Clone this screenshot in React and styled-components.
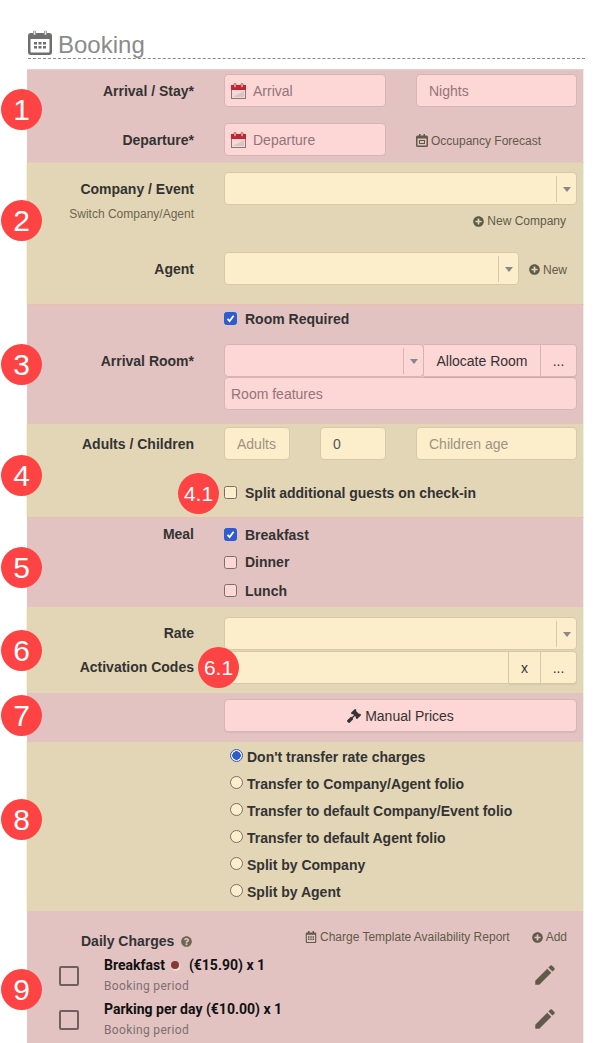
import React from "react";
import styled, { createGlobalStyle } from "styled-components";
import { FaPlusCircle, FaGavel, FaQuestionCircle, FaRegCalendarAlt } from "react-icons/fa";
import { MdEdit } from "react-icons/md";

const PINK = "#e3c3c2";
const TAN = "#e3d6b6";
const tones = {
  pink: { field: "#fdd6d6", line: "#d5b5b6", text: "#94747a" },
  tan: { field: "#fcedcb", line: "#d6c9a7", text: "#9c9482" },
};

const GlobalStyle = createGlobalStyle`
  html, body {
    margin: 0;
    height: 1043px;
    overflow: hidden;
    background: #fff;
    font-family: "Liberation Sans", Arial, sans-serif;
    font-size: 14px;
    color: #333;
  }
`;

const Page = styled.div`
  width: 558px;
  padding: 28px 0 0 27px;
`;

const Title = styled.h2`
  display: flex;
  align-items: flex-end;
  gap: 6px;
  height: 30px;
  margin: 0 0 10px 1px;
  width: 557px;
  border-bottom: 1px dashed #8a8a8a;
  color: #8b8b8b;
  font-size: 24px;
  font-weight: 400;
  line-height: 26px;
  svg {
    margin-bottom: 3px;
  }
`;

const Section = styled.section`
  position: relative;
  box-sizing: border-box;
  width: 557px;
  height: ${(p) => p.$height}px;
  padding-top: ${(p) => p.$top || 0}px;
  background: ${(p) => (p.$tone === "tan" ? TAN : PINK)};
  border-right: 1px solid #eee;
  box-shadow: ${(p) => (p.$tone === "tan" ? "-1px 0 0 #fbf1d4" : "none")};
  border-top: ${(p) => (p.$edge ? `1px solid ${p.$edge}` : "none")};
`;

const Badge = styled.div`
  position: absolute;
  z-index: 2;
  left: ${(p) => p.$left ?? -26}px;
  top: ${(p) => p.$y}px;
  width: 41px;
  height: 41px;
  border-radius: 50%;
  background: #fd4343;
  color: #fff;
  display: flex;
  align-items: center;
  justify-content: center;
  font-size: ${(p) => (p.$small ? 21 : 30)}px;
  line-height: 1;
`;

const Row = styled.div`
  display: grid;
  grid-template-columns: 167px 353px;
  column-gap: 30px;
  margin-bottom: ${(p) => p.$gap || 0}px;
`;

const Label = styled.label`
  text-align: right;
  font-weight: 700;
  font-size: 14px;
  height: ${(p) => p.$line || 33}px;
  line-height: ${(p) => p.$line || 35}px;
  color: #333;
  white-space: nowrap;
`;

const SubLabel = styled.div`
  text-align: right;
  font-size: 12px;
  line-height: 16px;
  color: #6b6650;
  margin-top: 1px;
`;

const Controls = styled.div`
  display: flex;
  gap: ${(p) => p.$gap || 0}px;
  align-items: center;
  min-width: 0;
`;

const Field = styled.div`
  box-sizing: border-box;
  flex: ${(p) => (p.$width ? `0 0 ${p.$width}px` : "1 1 0")};
  height: 33px;
  display: flex;
  align-items: center;
  gap: 7px;
  padding: 0 6px;
  background: ${(p) => tones[p.$tone].field};
  border: 1px solid ${(p) => tones[p.$tone].line};
  border-radius: 4px;
  font-size: 14px;
  color: ${(p) => (p.$value ? "#555" : tones[p.$tone].text)};
  padding-left: ${(p) => p.$inset || 6}px;
  min-width: 0;
`;

const Group = styled.div`
  display: flex;
  flex: 1;
  min-width: 0;
  & > * {
    border-radius: 0;
  }
  & > *:first-child {
    border-radius: ${(p) => (p.$flat ? "4px 0 0 4px" : "4px")};
  }
  & > *:last-child {
    border-radius: 0 4px 4px 0;
  }
`;

const GroupButton = styled.div`
  box-sizing: border-box;
  height: 33px;
  flex: 0 0 ${(p) => p.$width}px;
  display: flex;
  align-items: center;
  justify-content: center;
  background: ${(p) => tones[p.$tone].field};
  border: 1px solid ${(p) => tones[p.$tone].line};
  border-left: none;
  box-shadow: 0 1px 1px rgba(0, 0, 0, 0.06);
  color: #333;
  font-size: 14px;
`;

const SelectBox = styled(Field)`
  padding: 0;
  justify-content: flex-end;
  gap: 0;
`;

const Caret = styled.span`
  width: 19px;
  height: 26px;
  border-left: 1px solid ${(p) => tones[p.$tone].line};
  display: flex;
  align-items: center;
  justify-content: center;
  &::after {
    content: "";
    margin-top: 2px;
    border: 4px solid transparent;
    border-top: 5px solid #888;
    border-bottom: none;
  }
`;

const TextLink = styled.span`
  display: inline-flex;
  align-items: center;
  gap: 3px;
  padding-top: 2px;
  font-size: 12px;
  color: #5f5b48;
  white-space: nowrap;
`;

const LinkRow = styled.div`
  display: flex;
  justify-content: flex-end;
  padding-right: 11px;
  line-height: 16px;
  margin-top: 6px;
`;

const Check = styled.span`
  box-sizing: border-box;
  width: 13px;
  height: 13px;
  flex: none;
  border-radius: 2.500px;
  border: 1px solid ${(p) => (p.$on ? "#2f5bd0" : "#77706a")};
  background: ${(p) => (p.$on ? "#2f5bd0" : p.$tone === "tan" ? "#fcedcb" : "#fdd6d6")};
  display: flex;
  align-items: center;
  justify-content: center;
`;

const Option = styled.div`
  display: flex;
  align-items: center;
  gap: 8px;
  height: ${(p) => p.$height || 27}px;
  font-weight: 700;
  font-size: 14px;
  color: #333;
`;

const Radio = styled.span`
  box-sizing: border-box;
  width: 13px;
  height: 13px;
  border-radius: 50%;
  margin: -2px 0 0 6px;
  flex: none;
  border: 1px solid ${(p) => (p.$on ? "#2f5bd0" : "#77706a")};
  background: ${(p) => (p.$on ? "radial-gradient(circle, #2f5bd0 0 4px, #fcedcb 4.500px)" : "#fcedcb")};
`;

const RadioText = styled.span`
  margin-left: -4px;
`;

const WideButton = styled.div`
  box-sizing: border-box;
  height: 33px;
  width: 100%;
  display: flex;
  align-items: center;
  justify-content: center;
  gap: 4px;
  background: #fdd6d6;
  border: 1px solid #d5b5b6;
  border-radius: 4px;
  box-shadow: 0 1px 1px rgba(0, 0, 0, 0.06);
  font-size: 14px;
  color: #333;
`;

const ChargeHead = styled.div`
  display: flex;
  align-items: flex-start;
  padding-left: 54px;
  height: 43px;
  padding-top: 17px;
  box-sizing: border-box;
`;

const ChargeTitle = styled.div`
  display: flex;
  align-items: center;
  gap: 7px;
  margin-top: 5px;
  font-weight: 700;
  font-size: 14px;
  color: #333;
  svg {
    color: #6b6650;
  }
`;

const ChargeLinks = styled.div`
  margin-left: auto;
  padding-right: 16px;
  display: flex;
  gap: 22px;
`;

const Charge = styled.div`
  display: grid;
  grid-template-columns: 32px 20px 25px 1fr 26px 25px;
  align-items: center;
  height: 44px;
  & > svg {
    grid-column: 5;
    color: #5f5b48;
    margin-top: -3px;
  }
`;

const BigCheck = styled.span`
  grid-column: 2;
  box-sizing: border-box;
  width: 20px;
  height: 20px;
  margin-top: -1px;
  border: 2px solid #6f625e;
  border-radius: 2px;
`;

const ChargeText = styled.div`
  grid-column: 4;
  margin-bottom: 4px;
  font-family: Roboto, sans-serif;
  font-size: 14px;
`;

const ChargeName = styled.div`
  font-weight: 700;
  color: #111;
  line-height: 20px;
  display: flex;
  align-items: center;
  gap: 4px;
`;

const ChargeNote = styled.div`
  color: #7d6f70;
  font-size: 12px;
  line-height: 16px;
  margin-top: 3px;
  letter-spacing: 0.350px;
`;

const Dot = styled.span`
  width: 8px;
  height: 8px;
  border-radius: 50%;
  margin: 0 6px 0 2px;
  background: #843a35;
  box-shadow: 1px 2px 1px #f2dcd8;
`;

const HeadingIcon = () => (
  <svg width="24" height="25" viewBox="0 0 24 25">
    <path fill="#6f6f6f" fillRule="evenodd" d="M3 3h2V1h3v2h8V1h3v2h2a3 3 0 0 1 3 3v16a3 3 0 0 1-3 3H3a3 3 0 0 1-3-3V6a3 3 0 0 1 3-3zM2.500 9v12.500a1 1 0 0 0 1 1h17a1 1 0 0 0 1-1V9zM6 12h3v2.500H6zm4.500 0h3v2.500h-3zm4.500 0h3v2.500h-3zM6 16h3v2.500H6zm4.500 0h3v2.500h-3zm4.500 0h3v2.500h-3z" />
    <rect x="5.500" y="0" width="2" height="5" rx="1" fill="#ddd" />
    <rect x="16.500" y="0" width="2" height="5" rx="1" fill="#ddd" />
  </svg>
);

const DateIcon = () => (
  <svg width="15" height="16" viewBox="0 0 15 16" style={{ flex: "none" }}>
    <rect x="0.500" y="2.500" width="14" height="13" fill="#f3d8d8" stroke="#8f7474" />
    <rect x="0" y="2" width="15" height="5" fill="#c4232f" />
    <path d="M2 14 13 8v6z" fill="#d9c4c4" />
    <rect x="3" y="0.500" width="2" height="4" rx="1" fill="#fdd6d6" stroke="#8f3b3b" strokeWidth="0.800" />
    <rect x="10" y="0.500" width="2" height="4" rx="1" fill="#fdd6d6" stroke="#8f3b3b" strokeWidth="0.800" />
  </svg>
);

const ForecastIcon = () => (
  <svg width="12" height="13" viewBox="0 0 12 13">
    <path fill="#5f5b48" fillRule="evenodd" d="M1.500 1.500H3V0h1.500v1.500h3V0H9v1.500h1.500A1.500 1.500 0 0 1 12 3v8.500a1.500 1.500 0 0 1-1.500 1.500h-9A1.500 1.500 0 0 1 0 11.500V3a1.500 1.500 0 0 1 1.500-1.500zM1.500 4.500v7h9v-7zM3 6h6v4H3zm1 1v2h4V7z" />
  </svg>
);

const Tick = () => (
  <svg width="9" height="9" viewBox="0 0 9 9">
    <path d="M1.500 4.800 3.600 7 7.600 1.800" fill="none" stroke="#fff" strokeWidth="1.800" />
  </svg>
);

const Select = ({ tone, width }) => (
  <SelectBox $tone={tone} $width={width}>
    <Caret $tone={tone} />
  </SelectBox>
);

const TRANSFERS = [
  "Don't transfer rate charges",
  "Transfer to Company/Agent folio",
  "Transfer to default Company/Event folio",
  "Transfer to default Agent folio",
  "Split by Company",
  "Split by Agent",
];

const App = () => (
  <Page>
    <GlobalStyle />
    <Title>
      <HeadingIcon />
      Booking
    </Title>

    <Section $tone="pink" $height={93} $top={4} $edge="#f0cdc9">
      <Badge $y={19}>1</Badge>
      <Row $gap={16}>
        <Label>Arrival / Stay*</Label>
        <Controls $gap={30}>
          <Field $tone="pink" $width={162}>
            <DateIcon />
            Arrival
          </Field>
          <Field $tone="pink" $width={161} $inset={12}>Nights</Field>
        </Controls>
      </Row>
      <Row>
        <Label>Departure*</Label>
        <Controls $gap={30}>
          <Field $tone="pink" $width={162}>
            <DateIcon />
            Departure
          </Field>
          <TextLink>
            <ForecastIcon />
            Occupancy Forecast
          </TextLink>
        </Controls>
      </Row>
    </Section>

    <Section $tone="tan" $height={142} $top={9} $edge="#e6cdaf">
      <Badge $y={37}>2</Badge>
      <Row $gap={23}>
        <div>
          <Label as="div">Company / Event</Label>
          <SubLabel>Switch Company/Agent</SubLabel>
        </div>
        <div>
          <Controls>
            <Select tone="tan" />
          </Controls>
          <LinkRow>
            <TextLink>
              <FaPlusCircle size={11} />
              New Company
            </TextLink>
          </LinkRow>
        </div>
      </Row>
      <Row>
        <Label>Agent</Label>
        <Controls $gap={10}>
          <Select tone="tan" width={295} />
          <TextLink>
            <FaPlusCircle size={11} />
            New
          </TextLink>
        </Controls>
      </Row>
    </Section>

    <Section $tone="pink" $height={120} $edge="#ebbfae">
      <Badge $y={39}>3</Badge>
      <Row $gap={12}>
        <div />
        <Option>
          <Check $on><Tick /></Check>
          Room Required
        </Option>
      </Row>
      <Row>
        <Label>Arrival Room*</Label>
        <div>
          <Group>
            <Select tone="pink" />
            <GroupButton $tone="pink" $width={117}>Allocate Room</GroupButton>
            <GroupButton $tone="pink" $width={36}>...</GroupButton>
          </Group>
          <Field $tone="pink">Room features</Field>
        </div>
      </Row>
    </Section>

    <Section $tone="tan" $height={93} $top={3}>
      <Badge $y={31}>4</Badge>
      <Badge $y={49} $left={151} $small>4.1</Badge>
      <Row $gap={19}>
        <Label>Adults / Children</Label>
        <Controls $gap={30}>
          <Field $tone="tan" $width={66} $inset={12}>Adults</Field>
          <Field $tone="tan" $width={66} $inset={12} $value>0</Field>
          <Field $tone="tan" $width={161} $inset={12}>Children age</Field>
        </Controls>
      </Row>
      <Row>
        <div />
        <Option>
          <Check $tone="tan" />
          Split additional guests on check-in
        </Option>
      </Row>
    </Section>

    <Section $tone="pink" $height={90} $top={3} $edge="#ebbfae">
      <Badge $y={29}>5</Badge>
      <Row>
        <Label $line={27}>Meal</Label>
        <div>
          <Option>
            <Check $on><Tick /></Check>
            Breakfast
          </Option>
          <Option $height={28}>
            <Check />
            Dinner
          </Option>
          <Option $height={29}>
            <Check />
            Lunch
          </Option>
        </div>
      </Row>
    </Section>

    <Section $tone="tan" $height={86} $top={10}>
      <Badge $y={23}>6</Badge>
      <Badge $y={40} $left={171} $small>6.1</Badge>
      <Row $gap={1}>
        <Label $line={33}>Rate</Label>
        <Controls>
          <Select tone="tan" />
        </Controls>
      </Row>
      <Row>
        <Label $line={33}>Activation Codes</Label>
        <Group $flat>
          <Field $tone="tan" />
          <GroupButton $tone="tan" $width={32}>x</GroupButton>
          <GroupButton $tone="tan" $width={36}>...</GroupButton>
        </Group>
      </Row>
    </Section>

    <Section $tone="pink" $height={49} $top={6}>
      <Badge $y={2}>7</Badge>
      <Row>
        <div />
        <WideButton>
          <FaGavel size={14} />
          Manual Prices
        </WideButton>
      </Row>
    </Section>

    <Section $tone="tan" $height={169} $top={1}>
      <Badge $y={57}>8</Badge>
      <Row>
        <div />
        <div>
          {TRANSFERS.map((t, i) => (
            <Option key={t}>
              <Radio $on={i === 0} />
              <RadioText>{t}</RadioText>
            </Option>
          ))}
        </div>
      </Row>
    </Section>

    <Section $tone="pink" $height={200}>
      <Badge $y={58}>9</Badge>
      <ChargeHead>
        <ChargeTitle>
          Daily Charges
          <FaQuestionCircle size={11} />
        </ChargeTitle>
        <ChargeLinks>
          <TextLink>
            <FaRegCalendarAlt size={12} />
            Charge Template Availability Report
          </TextLink>
          <TextLink>
            <FaPlusCircle size={11} />
            Add
          </TextLink>
        </ChargeLinks>
      </ChargeHead>
      <Charge>
        <BigCheck />
        <ChargeText>
          <ChargeName>Breakfast <Dot /> (€15.90) x 1</ChargeName>
          <ChargeNote>Booking period</ChargeNote>
        </ChargeText>
        <MdEdit size={26} />
      </Charge>
      <Charge>
        <BigCheck />
        <ChargeText>
          <ChargeName>Parking per day (€10.00) x 1</ChargeName>
          <ChargeNote>Booking period</ChargeNote>
        </ChargeText>
        <MdEdit size={26} />
      </Charge>
    </Section>
  </Page>
);

export default App;
